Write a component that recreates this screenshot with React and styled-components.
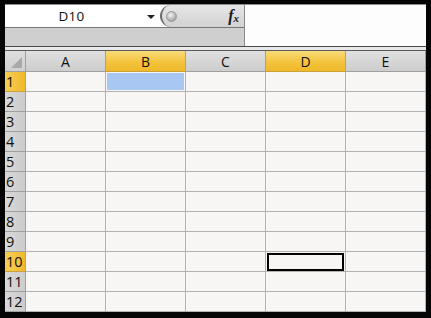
import React from "react";
import styled, { createGlobalStyle, css } from "styled-components";

const Global = createGlobalStyle`
  html, body { margin: 0; padding: 0; background: #000; }
  body { font-family: "Open Sans", "Noto Sans", sans-serif; }
`;

const Frame = styled.div`
  width: 431px;
  height: 318px;
  box-sizing: border-box;
  background: #050505;
  padding: 4px 5px 6px 5px;
  display: flex;
  flex-direction: column;
`;

const TopArea = styled.div`
  display: grid;
  grid-template-columns: 240px 1fr;
  height: 42px;
  border-top: 1px solid #8c8c8c;
`;

const LeftTop = styled.div`
  display: flex;
  flex-direction: column;
  border-right: 1px solid #8a8a8a;
`;

const NameRow = styled.div`
  display: flex;
  height: 22px;
  border-bottom: 1px solid #777;
  background: #fff;
`;

const NameBox = styled.div`
  width: 155px;
  display: flex;
  align-items: center;
  position: relative;
  font-size: 13.5px;
  color: #111;
`;

const NameText = styled.span`
  flex: 1;
  text-align: center;
  padding-right: 22px;
  letter-spacing: 0.2px;
`;

const DropArrow = styled.span`
  position: absolute;
  left: 142px;
  top: 10px;
  width: 0;
  height: 0;
  border-left: 4px solid transparent;
  border-right: 4px solid transparent;
  border-top: 4px solid #222;
`;

const Slider = styled.div`
  flex: 1;
  position: relative;
  display: flex;
  align-items: center;
  justify-content: flex-end;
  background: linear-gradient(#e6e6e6, #d2d2d2);
  border-left: 2px solid #6a6a6a;
  border-radius: 11px 0 0 11px;
  padding-right: 5px;
`;

const Knob = styled.span`
  position: absolute;
  left: 4px;
  top: 6px;
  width: 9px;
  height: 9px;
  border-radius: 50%;
  background: radial-gradient(circle at 40% 35%, #f4f4f4, #a9a9a9 70%);
  border: 1px solid #9a9a9a;
`;

const Fx = styled.span`
  font-family: "Liberation Serif", "DejaVu Serif", serif;
  font-style: italic;
  font-weight: bold;
  font-size: 16px;
  color: #1a1a1a;
  line-height: 1;
  sub {
    font-size: 11px;
    vertical-align: -1px;
  }
`;

const Band = styled.div`
  flex: 1;
  background: #cfcfcf;
`;

const FormulaArea = styled.div`
  background: #fdfdfd;
`;

const Separator = styled.div`
  height: 5px;
  box-sizing: border-box;
  border-top: 1px solid #4a4a4a;
  border-bottom: 1px solid #5a5a5a;
  background: #e9e9e9;
`;

const Sheet = styled.div`
  display: grid;
  grid-template-columns: 21px repeat(5, 80px);
  grid-template-rows: 21px repeat(12, 20px);
  background: #f7f6f5;
`;

const cellBase = css`
  box-sizing: border-box;
  border-right: 1px solid #b2b2b2;
  border-bottom: 1px solid #b2b2b2;
  position: relative;
`;

const Corner = styled.div`
  ${cellBase};
  background: linear-gradient(#dedede, #cfcfcf);
  border-color: #9f9f9f;
  &::after {
    content: "";
    position: absolute;
    right: 3px;
    bottom: 3px;
    width: 0;
    height: 0;
    border-left: 11px solid transparent;
    border-bottom: 11px solid #a9a9a9;
  }
`;

const ColHead = styled.div`
  ${cellBase};
  border-color: #9f9f9f;
  display: flex;
  align-items: center;
  justify-content: center;
  font-size: 14px;
  color: #111;
  background: ${(p) =>
    p.$active
      ? "linear-gradient(#f9da78, #f3c23a 60%, #f0b82a)"
      : "linear-gradient(#e0e0e0, #cdcdcd)"};
  ${(p) => p.$active && "border-color: #c9a23a;"}
`;

const RowHead = styled.div`
  ${cellBase};
  border-color: #9f9f9f;
  display: flex;
  align-items: center;
  padding-left: 1px;
  font-size: 14.5px;
  color: #111;
  background: ${(p) =>
    p.$active
      ? "linear-gradient(90deg, #f6cf55, #f0b92c)"
      : "linear-gradient(90deg, #d9d9d9, #cccccc)"};
  ${(p) => p.$active && "border-color: #c9a23a;"}
`;

const Cell = styled.div`
  ${cellBase};
  background: #f7f6f5;
  ${(p) =>
    p.$fill &&
    css`
      &::after {
        content: "";
        position: absolute;
        left: 1px;
        top: 1px;
        right: 1px;
        bottom: 1px;
        background: #a8c8f3;
      }
    `}
  ${(p) =>
    p.$selected &&
    css`
      &::after {
        content: "";
        position: absolute;
        left: 1px;
        top: 1px;
        right: 1px;
        bottom: 0px;
        border: 2px solid #000;
      }
    `}
`;

const cols = ["A", "B", "C", "D", "E"];

export default function App() {
  const rows = Array.from({ length: 12 }, (_, i) => i + 1);
  return (
    <>
      <Global />
      <Frame>
        <TopArea>
          <LeftTop>
            <NameRow>
              <NameBox>
                <NameText>D10</NameText>
                <DropArrow />
              </NameBox>
              <Slider>
                <Knob />
                <Fx>
                  f<sub>x</sub>
                </Fx>
              </Slider>
            </NameRow>
            <Band />
          </LeftTop>
          <FormulaArea />
        </TopArea>
        <Separator />
        <Sheet>
          <Corner />
          {cols.map((c) => (
            <ColHead key={c} $active={c === "B" || c === "D"}>
              {c}
            </ColHead>
          ))}
          {rows.map((r) => (
            <React.Fragment key={r}>
              <RowHead $active={r === 1 || r === 10}>{r}</RowHead>
              {cols.map((c) => (
                <Cell
                  key={c}
                  $fill={r === 1 && c === "B"}
                  $selected={r === 10 && c === "D"}
                />
              ))}
            </React.Fragment>
          ))}
        </Sheet>
      </Frame>
    </>
  );
}
